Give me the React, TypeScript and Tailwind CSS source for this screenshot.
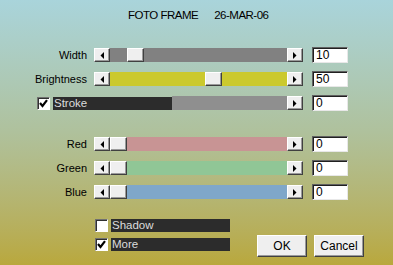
import React from "react";

const raised =
  "bg-[#efefef] border border-t-white border-l-white border-r-[#404040] border-b-[#404040] shadow-[inset_-1px_-1px_#9a9a9a]";

const Arrow = ({ dir }: { dir: "left" | "right" }) => (
  <svg width="4" height="7" viewBox="0 0 4 7">
    {dir === "left" ? (
      <polygon points="4,0 4,7 0.5,3.5" fill="#000" />
    ) : (
      <polygon points="0,0 0,7 3.5,3.5" fill="#000" />
    )}
  </svg>
);

const ScrollBtn = ({ dir }: { dir: "left" | "right" }) => (
  <div className={`w-[16px] h-[14px] flex items-center justify-center ${raised}`}>
    <Arrow dir={dir} />
  </div>
);

const Thumb = () => <div className={`w-[17px] h-[14px] ${raised}`} />;

const ValueBox = ({ value }: { value: string }) => (
  <div className="ml-[9px] w-[36px] h-[16px] bg-white border border-t-[#606060] border-l-[#606060] border-r-[#e8e8e8] border-b-[#e8e8e8] shadow-[inset_1px_1px_#202020] pl-[3px] text-[12px] leading-[15px] text-black">
    {value}
  </div>
);

const SliderRow = ({
  label,
  value,
  offset,
  track,
}: {
  label: string;
  value: string;
  offset: number;
  track: string;
}) => (
  <div className="flex items-center h-[16px]">
    <div className="w-[87px] text-right text-[11px] leading-none">{label}</div>
    <div className="ml-[7px] flex w-[209px] h-[14px]">
      <ScrollBtn dir="left" />
      <div className={`flex flex-1 h-[14px] ${track}`}>
        <div style={{ width: offset }} />
        <Thumb />
      </div>
      <ScrollBtn dir="right" />
    </div>
    <ValueBox value={value} />
  </div>
);

const Check = ({ checked }: { checked: boolean }) => (
  <div className="w-[13px] h-[13px] bg-white border border-t-[#707070] border-l-[#707070] border-r-white border-b-white shadow-[inset_1px_1px_#303030] flex items-center justify-center">
    {checked && (
      <svg width="9" height="9" viewBox="0 0 9 9">
        <path d="M1 4 L3.5 7 L8 1.2" stroke="#000" strokeWidth="2.2" fill="none" />
      </svg>
    )}
  </div>
);

const DarkLabel = ({ text, w }: { text: string; w: string }) => (
  <div className={`ml-[3px] h-[13px] bg-[#2c2c2c] text-[#dcdcdc] text-[11.5px] leading-[13px] pl-[1px] ${w}`}>
    {text}
  </div>
);

export default function App() {
  return (
    <div className="w-[393px] h-[265px] flex flex-col bg-linear-to-b from-[#a9d4db] via-[#afc19c] to-[#b9a83c] font-['Liberation_Sans',Arial,sans-serif] text-black select-none">
      <div className="flex pl-[128px] pt-[9px] gap-[16px] text-[11.5px] leading-[13px] tracking-[-0.5px]">
        <span>FOTO FRAME</span>
        <span>26-MAR-06</span>
      </div>

      <div className="mt-[25px] flex flex-col gap-[8px]">
        <SliderRow label="Width" value="10" offset={17} track="bg-[#818181]" />
        <SliderRow label="Brightness" value="50" offset={95} track="bg-[#cbc92e]" />
        <div className="flex items-center h-[16px]">
          <div className="ml-[37px]">
            <Check checked />
          </div>
          <DarkLabel text="Stroke" w="w-[119px]" />
          <div className="w-[115px] h-[14px] bg-[#8f8f8f]" />
          <ScrollBtn dir="right" />
          <ValueBox value="0" />
        </div>
      </div>

      <div className="mt-[25px] flex flex-col gap-[8px]">
        <SliderRow label="Red" value="0" offset={0} track="bg-[#c89494]" />
        <SliderRow label="Green" value="0" offset={0} track="bg-[#90c696]" />
        <SliderRow label="Blue" value="0" offset={0} track="bg-[#7fa7c9]" />
      </div>

      <div className="mt-[19px] flex pl-[95px]">
        <div className="flex flex-col gap-[6px]">
          <div className="flex items-center">
            <Check checked={false} />
            <DarkLabel text="Shadow" w="w-[119px]" />
          </div>
          <div className="flex items-center">
            <Check checked />
            <DarkLabel text="More" w="w-[119px]" />
          </div>
        </div>
        <div className="ml-[27px] mt-[16px] flex gap-[7px]">
          <button className={`w-[50px] h-[22px] text-[12px] ${raised}`}>OK</button>
          <button className={`w-[50px] h-[22px] text-[12px] ${raised}`}>Cancel</button>
        </div>
      </div>
    </div>
  );
}
